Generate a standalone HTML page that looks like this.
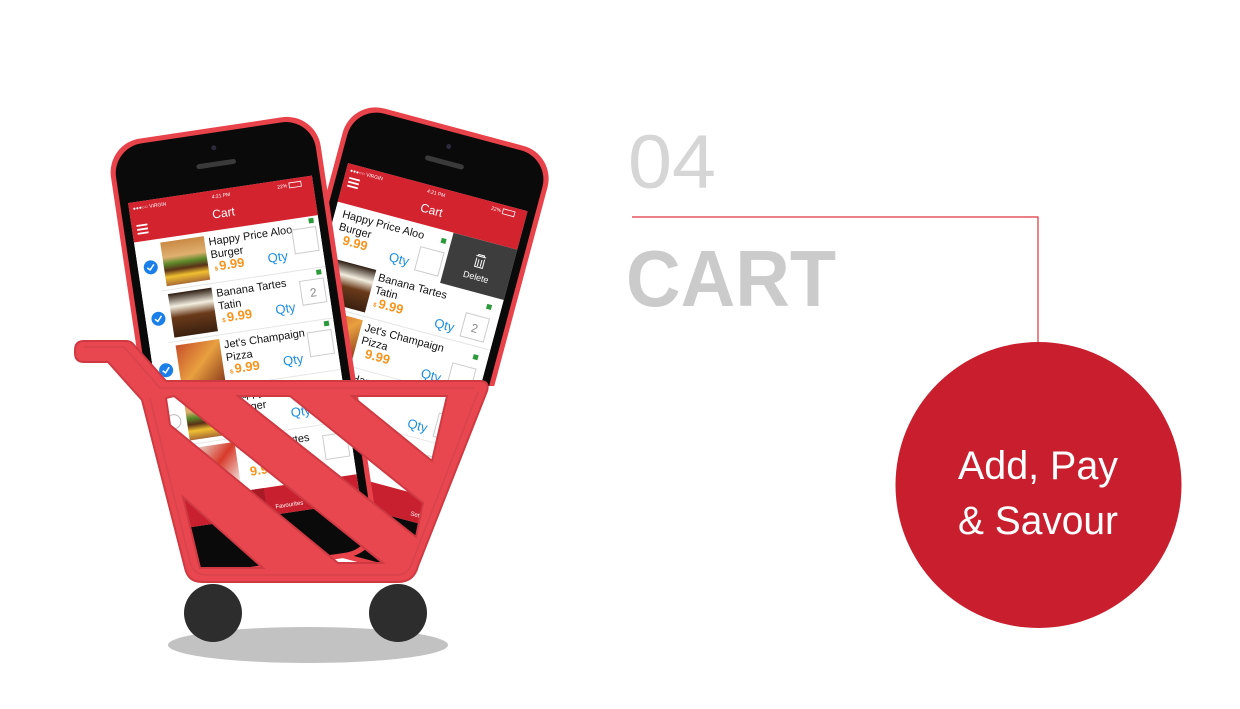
<!DOCTYPE html>
<html><head><meta charset="utf-8"><style>
html,body{margin:0;padding:0;background:#fff;width:1240px;height:709px;overflow:hidden}
svg{display:block}
text{font-family:"Liberation Sans",Arial,sans-serif}
</style></head><body>
<svg width="1240" height="709" viewBox="0 0 1240 709" xmlns="http://www.w3.org/2000/svg">
<defs>
<clipPath id="phClip"><path d="M0,0 H1240 V386 H484 L415,572 L195,582 L140,398 L0,398 Z"/></clipPath>
<clipPath id="scr"><rect x="0" y="0" width="186" height="330"/></clipPath>
<linearGradient id="burg" x1="0" y1="0" x2="0" y2="1"><stop offset="0" stop-color="#c98a45"/><stop offset=".35" stop-color="#e0b070"/><stop offset=".5" stop-color="#5c8a2a"/><stop offset=".65" stop-color="#5a3018"/><stop offset=".8" stop-color="#f0c030"/><stop offset="1" stop-color="#a86a35"/></linearGradient>
<linearGradient id="dess" x1="0" y1="0" x2="0" y2="1"><stop offset="0" stop-color="#2a1a10"/><stop offset=".3" stop-color="#f2eee0"/><stop offset=".55" stop-color="#6a3a1a"/><stop offset="1" stop-color="#3a2010"/></linearGradient>
<linearGradient id="pizz" x1="0" y1="0" x2="1" y2="1"><stop offset="0" stop-color="#c8502a"/><stop offset=".5" stop-color="#e8a040"/><stop offset="1" stop-color="#8a3a1a"/></linearGradient>
<linearGradient id="capr" x1="0" y1="0" x2="1" y2="1"><stop offset="0" stop-color="#e8e8e0"/><stop offset=".5" stop-color="#d83a2a"/><stop offset="1" stop-color="#f4f4f0"/></linearGradient>
</defs>

<ellipse cx="308" cy="645" rx="140" ry="18" fill="#c2c2c2"/>
<circle cx="213" cy="613" r="29" fill="#2d2d2d"/>
<circle cx="398" cy="613" r="29" fill="#2d2d2d"/>

<g clip-path="url(#phClip)">
<!-- RIGHT PHONE (behind) -->
<g transform="translate(348,163) rotate(15)">
 <rect x="-13" y="-62" width="212" height="445" rx="34" fill="#e8424a"/>
 <rect x="-8" y="-57" width="202" height="435" rx="30" fill="#0a0a0a"/>
 <rect x="73" y="-28" width="40" height="5" rx="2.5" fill="#3a3a3a"/>
 <circle cx="93" cy="-42" r="2.5" fill="#2a2a3a"/>
 <circle cx="93" cy="357" r="15" fill="none" stroke="#333" stroke-width="2"/>
 <g clip-path="url(#scr)">
  <rect x="0" y="0" width="186" height="330" fill="#fff"/>
  <rect x="0" y="0" width="186" height="40" fill="#d2232f"/>
  <text x="4" y="8" font-size="5" fill="#fff">●●●○○ VIRGIN</text>
  <text x="93" y="8" font-size="5" fill="#fff" text-anchor="middle">4:21 PM</text>
  <text x="150" y="8" font-size="5" fill="#fff">22%</text>
  <rect x="162" y="4" width="12" height="5" fill="none" stroke="#fff" stroke-width=".8"/>
  <text x="93" y="28" font-size="12" fill="#fff" text-anchor="middle">Cart</text>
  <path d="M5,14 h11 M5,18 h11 M5,22 h11" stroke="#fff" stroke-width="1.8"/>
  <g transform="translate(-66,40)">
   <text x="74" y="14" font-size="11" fill="#111">Happy Price Aloo</text><text x="74" y="27" font-size="11" fill="#111">Burger</text>
   <text x="81" y="40" font-size="13" fill="#f7941d" font-weight="bold">9.99</text>
   <text x="130" y="44" font-size="13" fill="#1a8ee0">Qty</text>
   <rect x="158" y="22" width="24" height="24" fill="#fff" stroke="#ccc"/>
   <rect x="176" y="8" width="5" height="5" fill="#2a9a3a"/>
  </g>
  <rect x="120" y="40" width="66" height="52" fill="#3d3d3d"/>
  <path d="M148,56 h10 M150,56 v-1.5 h6 v1.5 M149,58 v9 h8 v-9 M151.5,59 v7 M154.5,59 v7" stroke="#fff" stroke-width="1" fill="none"/>
  <text x="153" y="80" font-size="9" fill="#fff" text-anchor="middle">Delete</text>
  <g transform="translate(-15,92)">
   <rect x="26" y="4" width="44" height="44" fill="url(#dess)"/>
   <text x="74" y="14" font-size="11" fill="#111">Banana Tartes</text><text x="74" y="27" font-size="11" fill="#111">Tatin</text>
   <text x="76" y="40" font-size="6" fill="#f7941d" font-weight="bold">$</text><text x="81" y="40" font-size="13" fill="#f7941d" font-weight="bold">9.99</text>
   <text x="140" y="44" font-size="13" fill="#1a8ee0">Qty</text>
   <rect x="168" y="22" width="24" height="24" fill="#fff" stroke="#ccc"/><text x="180" y="39" font-size="12" fill="#888" text-anchor="middle">2</text>
   <rect x="186" y="8" width="5" height="5" fill="#2a9a3a"/>
   <line x1="0" y1="52" x2="200" y2="52" stroke="#e6e6e6"/>
  </g>
  <g transform="translate(-15,144)">
   <rect x="26" y="4" width="44" height="44" fill="url(#pizz)"/>
   <text x="74" y="14" font-size="11" fill="#111">Jet's Champaign</text><text x="74" y="27" font-size="11" fill="#111">Pizza</text>
   <text x="81" y="40" font-size="13" fill="#f7941d" font-weight="bold">9.99</text>
   <text x="140" y="44" font-size="13" fill="#1a8ee0">Qty</text>
   <rect x="168" y="22" width="24" height="24" fill="#fff" stroke="#ccc"/>
   <rect x="186" y="8" width="5" height="5" fill="#2a9a3a"/>
   <line x1="0" y1="52" x2="200" y2="52" stroke="#e6e6e6"/>
  </g>
  <g transform="translate(-15,196)">
   <rect x="26" y="4" width="44" height="44" fill="url(#burg)"/>
   <text x="74" y="14" font-size="11" fill="#111">Happy Price</text>
   <text x="140" y="44" font-size="13" fill="#1a8ee0">Qty</text>
   <rect x="168" y="22" width="24" height="24" fill="#fff" stroke="#ccc"/>
   <line x1="0" y1="52" x2="200" y2="52" stroke="#e6e6e6"/>
  </g>
  <g transform="translate(-15,248)">
   <text x="74" y="14" font-size="11" fill="#111">Banana Tartes</text>
   <text x="140" y="40" font-size="13" fill="#1a8ee0">Qty</text>
   <rect x="168" y="14" width="24" height="24" fill="#fff" stroke="#ccc"/>
  </g>
  <rect x="0" y="302" width="186" height="28" fill="#c8202e"/>
  <text x="162" y="324" font-size="6" fill="#fff" text-anchor="middle">Settings</text>
 </g>
</g>

<!-- LEFT PHONE -->
<g transform="translate(128,203) rotate(-8.5)">
 <rect x="-13" y="-62" width="212" height="445" rx="34" fill="#e8424a"/>
 <rect x="-8" y="-57" width="202" height="435" rx="30" fill="#0a0a0a"/>
 <rect x="73" y="-28" width="40" height="5" rx="2.5" fill="#3a3a3a"/>
 <circle cx="93" cy="-42" r="2.5" fill="#2a2a3a"/>
 <circle cx="93" cy="357" r="15" fill="none" stroke="#333" stroke-width="2"/>
 <g clip-path="url(#scr)">
  <rect x="0" y="0" width="186" height="330" fill="#fff"/>
  <rect x="0" y="0" width="186" height="40" fill="#d2232f"/>
  <text x="4" y="8" font-size="5" fill="#fff">●●●○○ VIRGIN</text>
  <text x="93" y="8" font-size="5" fill="#fff" text-anchor="middle">4:21 PM</text>
  <text x="150" y="8" font-size="5" fill="#fff">22%</text>
  <rect x="162" y="4" width="12" height="5" fill="none" stroke="#fff" stroke-width=".8"/>
  <text x="93" y="28" font-size="12" fill="#fff" text-anchor="middle">Cart</text>
  <path d="M5,24 h11 M5,28 h11 M5,32 h11" stroke="#fff" stroke-width="1.8"/>
  <g transform="translate(0,40)">
   <circle cx="13" cy="27" r="7" fill="#1a7fe8"/><path d="M9.5,27 l2.5,2.5 l4.5,-5" stroke="#fff" stroke-width="1.5" fill="none"/>
   <rect x="26" y="4" width="44" height="44" fill="url(#burg)"/>
   <text x="74" y="14" font-size="11" fill="#111">Happy Price Aloo</text><text x="74" y="27" font-size="11" fill="#111">Burger</text>
   <text x="76" y="40" font-size="6" fill="#f7941d" font-weight="bold">$</text><text x="81" y="40" font-size="13" fill="#f7941d" font-weight="bold">9.99</text>
   <text x="130" y="40" font-size="13" fill="#1a8ee0">Qty</text>
   <rect x="158" y="11" width="24" height="24" fill="#fff" stroke="#ccc"/>
   <rect x="176" y="2" width="5" height="5" fill="#2a9a3a"/>
   <line x1="20" y1="52" x2="186" y2="52" stroke="#e6e6e6"/>
  </g>
  <g transform="translate(0,92)">
   <circle cx="13" cy="27" r="7" fill="#1a7fe8"/><path d="M9.5,27 l2.5,2.5 l4.5,-5" stroke="#fff" stroke-width="1.5" fill="none"/>
   <rect x="26" y="4" width="44" height="44" fill="url(#dess)"/>
   <text x="74" y="14" font-size="11" fill="#111">Banana Tartes</text><text x="74" y="27" font-size="11" fill="#111">Tatin</text>
   <text x="76" y="40" font-size="6" fill="#f7941d" font-weight="bold">$</text><text x="81" y="40" font-size="13" fill="#f7941d" font-weight="bold">9.99</text>
   <text x="130" y="40" font-size="13" fill="#1a8ee0">Qty</text>
   <rect x="158" y="11" width="24" height="24" fill="#fff" stroke="#ccc"/><text x="170" y="28" font-size="12" fill="#888" text-anchor="middle">2</text>
   <rect x="176" y="2" width="5" height="5" fill="#2a9a3a"/>
   <line x1="20" y1="52" x2="186" y2="52" stroke="#e6e6e6"/>
  </g>
  <g transform="translate(0,144)">
   <circle cx="13" cy="27" r="7" fill="#1a7fe8"/><path d="M9.5,27 l2.5,2.5 l4.5,-5" stroke="#fff" stroke-width="1.5" fill="none"/>
   <rect x="26" y="4" width="44" height="44" fill="url(#pizz)"/>
   <text x="74" y="14" font-size="11" fill="#111">Jet's Champaign</text><text x="74" y="27" font-size="11" fill="#111">Pizza</text>
   <text x="76" y="40" font-size="6" fill="#f7941d" font-weight="bold">$</text><text x="81" y="40" font-size="13" fill="#f7941d" font-weight="bold">9.99</text>
   <text x="130" y="40" font-size="13" fill="#1a8ee0">Qty</text>
   <rect x="158" y="11" width="24" height="24" fill="#fff" stroke="#ccc"/>
   <rect x="176" y="2" width="5" height="5" fill="#2a9a3a"/>
   <line x1="20" y1="52" x2="186" y2="52" stroke="#e6e6e6"/>
  </g>
  <g transform="translate(0,196)">
   <circle cx="13" cy="27" r="7" fill="#fff" stroke="#bbb"/>
   <rect x="26" y="4" width="44" height="44" fill="url(#burg)"/>
   <text x="74" y="14" font-size="11" fill="#111">Happy Price Aloo</text><text x="74" y="27" font-size="11" fill="#111">Burger</text>
   <text x="130" y="40" font-size="13" fill="#1a8ee0">Qty</text>
   <rect x="158" y="11" width="24" height="24" fill="#fff" stroke="#ccc"/>
   <line x1="20" y1="52" x2="186" y2="52" stroke="#e6e6e6"/>
  </g>
  <g transform="translate(0,248)">
   <rect x="26" y="4" width="44" height="44" fill="url(#capr)"/>
   <text x="74" y="14" font-size="11" fill="#111">Banana Tartes</text>
   <text x="81" y="40" font-size="13" fill="#f7941d" font-weight="bold">9.99</text>
   <text x="130" y="40" font-size="13" fill="#1a8ee0">Qty</text>
   <rect x="158" y="11" width="24" height="24" fill="#fff" stroke="#ccc"/>
  </g>
  <rect x="0" y="302" width="186" height="28" fill="#c8202e"/>
  <rect x="46" y="302" width="46" height="28" fill="#a81a26"/>
  <text x="69" y="324" font-size="6" fill="#fff" text-anchor="middle">Cart</text>
  <text x="115" y="324" font-size="6" fill="#fff" text-anchor="middle">Favourites</text>
  <text x="162" y="324" font-size="6" fill="#fff" text-anchor="middle">Settings</text>
 </g>
</g>
</g>

<!-- CART -->
<path fill-rule="evenodd" fill="#e8474f" stroke="#cf3a42" stroke-width="2" d="
M75,350 Q75,341 84,341 L126,341 Q131,341 134,345 L166,381 L480,381 Q490,381 487,391 L418,566 Q414,582 398,582 L202,582 Q188,582 185,568 L142,400 L108,362 L84,362 Q75,362 75,353 Z
M166,398 L174,396 L383,563 L338,563 L170,425 Z
M183,497 L263,568 L200,568 Z
M238,396 L290,396 L423,503 L416,537 Z
M352,396 L447,396 L432,461 Z"/>
<path fill="none" stroke="#d8434b" stroke-width="1.5" d="M84,347 L124,347 L160,388 L474,388 M150,398 L190,562 Q193,574 205,575 L396,575 Q408,575 412,563 L478,392"/>

<text x="628" y="188" font-size="76" fill="#d6d6d6" textLength="88" lengthAdjust="spacingAndGlyphs">04</text>
<path d="M632,217 H1038 V343" fill="none" stroke="#e0313d" stroke-width="1.2"/>
<text x="626" y="306" font-size="80" fill="#cbcbcb" font-weight="bold" textLength="210" lengthAdjust="spacingAndGlyphs">CART</text>
<circle cx="1038.5" cy="485" r="143" fill="#c91e2e"/>
<text x="958" y="479" font-size="40" fill="#fff" textLength="160" lengthAdjust="spacingAndGlyphs">Add, Pay</text>
<text x="958" y="534" font-size="40" fill="#fff" textLength="160" lengthAdjust="spacingAndGlyphs">&amp; Savour</text>
</svg>
</body></html>
